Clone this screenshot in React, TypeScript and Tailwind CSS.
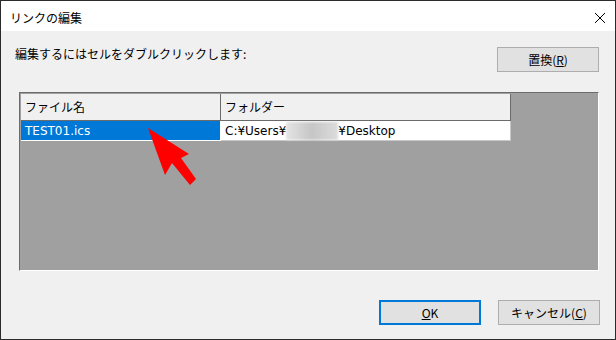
import type React from "react"

const font = { fontFamily: '"Noto Sans CJK JP", "Liberation Sans", sans-serif' }
const cellFont = { fontFamily: '"DejaVu Sans", "Noto Sans CJK JP", sans-serif' }

const Button: React.FC<{ label: React.ReactNode; primary?: boolean }> = ({ label, primary }) => (
  <div
    className={
      "w-[102px] h-[25px] flex items-center justify-center bg-[#e1e1e1] text-[12px] text-black " +
      (primary ? "border-2 border-[#0078d7]" : "border border-[#adadad]")
    }
  >
    {label}
  </div>
)

const App: React.FC = () => {
  return (
    <div className="w-[616px] h-[340px] border border-[#2b2b2b] bg-[#f0f0f0] flex flex-col relative" style={font}>
      <div className="h-[30px] bg-white flex items-center justify-between pl-[9px] pr-[10px] pt-[3px]">
        <span className="text-[12px] text-black">リンクの編集</span>
        <svg width="12" height="12" viewBox="0 0 12 12" className="mr-[-1px]">
          <path d="M1 1 L11 11 M11 1 L1 11" stroke="#000" strokeWidth="1" />
        </svg>
      </div>

      <div className="flex flex-col pl-[18px] pr-[16px]">
        <div className="flex justify-between items-start pt-[16px]">
          <span className="text-[12px] text-black ml-[-4px] mt-[-2px]">編集するにはセルをダブルクリックします:</span>
          <Button label={<span>置換(<u>R</u>)</span>} />
        </div>

        <div className="mt-[20px] h-[179px] border-t border-l border-[#6b6b6b] border-r border-b border-r-white border-b-white bg-[#a0a0a0] flex flex-col pl-[1px] pt-[1px]">
          <div className="flex h-[27px]">
            <div className="w-[200px] bg-[#f0f0f0] border-r border-b border-[#6b6b6b] flex items-center pl-[4px] text-[12px] text-black">
              ファイル名
            </div>
            <div className="w-[290px] bg-[#f0f0f0] border-r border-b border-[#6b6b6b] flex items-center pl-[4px] text-[12px] text-black">
              フォルダー
            </div>
          </div>
          <div className="flex h-[20px]" style={cellFont}>
            <div className="w-[200px] bg-[#0078d7] border-r border-b border-white flex items-center pl-[4px] text-[12px] text-white">
              TEST01.ics
            </div>
            <div className="w-[290px] bg-white border-r border-b border-[#c8c8c8] flex items-center pl-[4px] text-[12px] text-black">
              C:¥Users¥
              <span className="inline-block w-[52px] h-[18px] bg-gradient-to-r from-[#e4e4e4] via-[#c6c6c6] to-[#dcdcdc] blur-[1px]" />
              ¥Desktop
            </div>
          </div>
        </div>

        <div className="flex justify-end gap-[17px] mt-[29px] mr-[-1px]">
          <Button label={<span><u>O</u>K</span>} primary />
          <Button label={<span>キャンセル(<u>C</u>)</span>} />
        </div>
      </div>

      <svg className="absolute left-0 top-0 pointer-events-none" width="616" height="340">
        <polygon
          points="147,127 188,153 180,157 195,178 189,184 171,162 164,174"
          fill="#ff0000"
        />
      </svg>
    </div>
  )
}

export default App
